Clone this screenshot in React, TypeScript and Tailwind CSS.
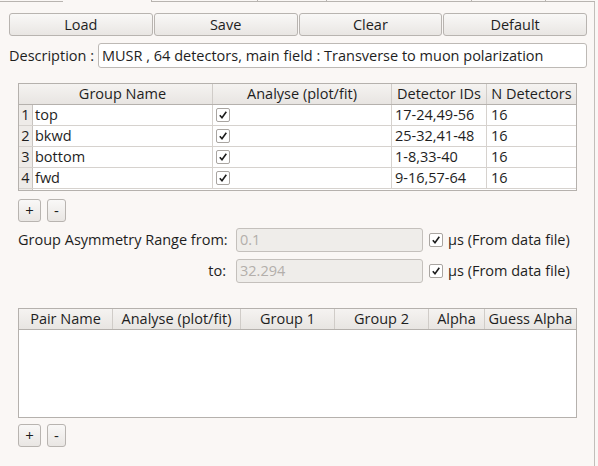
import React from 'react';

const groups = [
  { n: 1, name: 'top', ids: '17-24,49-56', det: '16' },
  { n: 2, name: 'bkwd', ids: '25-32,41-48', det: '16' },
  { n: 3, name: 'bottom', ids: '1-8,33-40', det: '16' },
  { n: 4, name: 'fwd', ids: '9-16,57-64', det: '16' },
];

const Check = () => (
  <span className="flex h-[14px] w-[14px] items-center justify-center rounded-[2px] border border-[#a9a5a1] bg-white">
    <svg width="10" height="10" viewBox="0 0 10 10">
      <path d="M1.8 5.2 L4 7.8 L8.3 1.8" fill="none" stroke="#1c1c1c" strokeWidth="1.6" />
    </svg>
  </span>
);

const Btn = ({ label, className }: { label: string; className?: string }) => (
  <button
    className={
      'flex items-center justify-center rounded-[3px] border border-[#b8b4b0] bg-gradient-to-b from-[#f9f8f7] to-[#e9e6e3] text-[#1e1e1e] ' +
      (className ?? '')
    }
  >
    {label}
  </button>
);

const PlusMinus = () => (
  <div className="flex gap-[6px] pl-[18px]">
    <Btn label="+" className="h-[23px] w-[23px] text-[15px]" />
    <Btn label="-" className="h-[23px] w-[19px] text-[15px]" />
  </div>
);

const hdr = 'flex h-[20px] items-center justify-center border-r border-[#d0ccc8] last:border-r-0';

const App: React.FC = () => {
  return (
    <div
      className="relative h-[466px] w-[598px] overflow-hidden bg-[#faf7f5] text-[14.5px] text-[#1e1e1e]"
      style={{ fontFamily: '"Open Sans", "Noto Sans", sans-serif' }}
    >
      {/* tab strip remnant */}
      <div className="flex h-[2px]">
        <div className="w-[63px] border-b border-[#b8b4b0]" />
        <div className="w-[88px]" />
        <div className="w-[106px] border-b border-l border-[#b8b4b0]" />
        <div className="w-[69px] border-b border-l border-[#b8b4b0]" />
        <div className="w-[145px] border-b border-l border-[#b8b4b0]" />
        <div className="w-[74px] border-b border-l border-[#b8b4b0]" />
        <div className="w-[50px] border-b border-l border-[#b8b4b0]" />
      </div>

      <div className="flex h-[464px] w-[595px] flex-col border-r border-[#c2beba]">
        {/* top buttons */}
        <div className="mt-[11px] ml-[9px] grid w-[578px] grid-cols-4 gap-[1px]">
          <Btn label="Load" className="h-[23px]" />
          <Btn label="Save" className="h-[23px]" />
          <Btn label="Clear" className="h-[23px]" />
          <Btn label="Default" className="h-[23px]" />
        </div>

        {/* description */}
        <div className="mt-[7px] ml-[9px] flex items-center">
          <span className="w-[89px] whitespace-nowrap">Description :</span>
          <div className="flex h-[25px] w-[489px] items-center rounded-[3px] border border-[#bdb9b5] bg-white px-[3px] whitespace-nowrap">
            MUSR , 64 detectors, main field : Transverse to muon polarization
          </div>
        </div>

        {/* group table */}
        <div className="mt-[15px] ml-[18px] flex h-[108px] w-[559px] flex-col border border-[#b5b1ad] bg-white">
          <div className="flex border-b border-[#b5b1ad] bg-gradient-to-b from-[#f5f3f1] to-[#e8e5e2]">
            <div className="h-[20px] w-[14px]" />
            <div className={hdr + ' w-[180px]'}>Group Name</div>
            <div className={hdr + ' w-[179px]'}>Analyse (plot/fit)</div>
            <div className={hdr + ' w-[95px]'}>Detector IDs</div>
            <div className={hdr + ' flex-1'}>N Detectors</div>
          </div>
          {groups.map((g) => (
            <div key={g.n} className="flex h-[21px] border-b border-[#d6d2ce]">
              <div className="flex w-[14px] items-center justify-center border-r border-[#c8c4c0] bg-[#eeebe8]">{g.n}</div>
              <div className="flex w-[180px] items-center border-r border-[#d6d2ce] pl-[2px]">{g.name}</div>
              <div className="flex w-[179px] items-center border-r border-[#d6d2ce] pl-[3px]">
                <Check />
              </div>
              <div className="flex w-[95px] items-center border-r border-[#d6d2ce] pl-[3px]">{g.ids}</div>
              <div className="flex flex-1 items-center pl-[4px]">{g.det}</div>
            </div>
          ))}
          <div className="flex flex-1">
            <div className="w-[14px] border-r border-[#c8c4c0] bg-[#eeebe8]" />
          </div>
        </div>

        <div className="mt-[8px]">
          <PlusMinus />
        </div>

        {/* asymmetry range */}
        <div className="mt-[6px] flex flex-col gap-[7px]">
          <div className="flex items-center">
            <span className="w-[226px] pl-[18px] text-right whitespace-nowrap">Group Asymmetry Range from:</span>
            <div className="ml-[10px] flex h-[24px] w-[187px] items-center rounded-[3px] border border-[#c4c0bc] bg-[#efedea] px-[3px] text-[#b3afab]">
              0.1
            </div>
            <span className="ml-[6px]">
              <Check />
            </span>
            <span className="ml-[5px] whitespace-nowrap">μs (From data file)</span>
          </div>
          <div className="flex items-center">
            <span className="w-[226px] text-right">to:</span>
            <div className="ml-[10px] flex h-[24px] w-[187px] items-center rounded-[3px] border border-[#c4c0bc] bg-[#efedea] px-[3px] text-[#b3afab]">
              32.294
            </div>
            <span className="ml-[6px]">
              <Check />
            </span>
            <span className="ml-[5px] whitespace-nowrap">μs (From data file)</span>
          </div>
        </div>

        {/* pair table */}
        <div className="mt-[25px] ml-[18px] flex h-[110px] w-[559px] flex-col border border-[#b5b1ad] bg-white">
          <div className="flex border-b border-[#b5b1ad] bg-gradient-to-b from-[#f5f3f1] to-[#e8e5e2]">
            <div className={hdr + ' w-[94px]'}>Pair Name</div>
            <div className={hdr + ' w-[128px]'}>Analyse (plot/fit)</div>
            <div className={hdr + ' w-[94px]'}>Group 1</div>
            <div className={hdr + ' w-[94px]'}>Group 2</div>
            <div className={hdr + ' w-[56px]'}>Alpha</div>
            <div className={hdr + ' flex-1'}>Guess Alpha</div>
          </div>
        </div>

        <div className="mt-[6px]">
          <PlusMinus />
        </div>
      </div>
    </div>
  );
};

export default App;
